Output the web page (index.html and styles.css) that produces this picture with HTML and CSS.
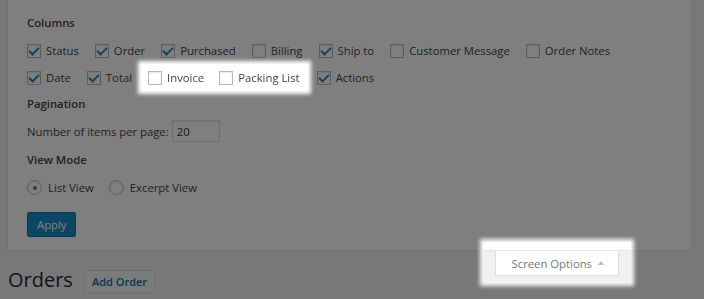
FILE: index.html
```html
<!DOCTYPE html>
<html lang="en">
<head>
  <meta charset="UTF-8">
  <meta name="viewport" content="width=device-width, initial-scale=1.0">
  <title>Orders</title>
  <link rel="stylesheet" href="styles.css">
</head>
<body>
<div class="wrap">
  <!-- Screen options panel (open) -->
  <div class="screen-meta">
    <form class="screen-options">
      <h5>Columns</h5>
      <div class="prefs">
        <div class="prefs-row">
          <label class="opt"><input type="checkbox" checked>Status</label>
          <label class="opt"><input type="checkbox" checked>Order</label>
          <label class="opt"><input type="checkbox" checked>Purchased</label>
          <label class="opt"><input type="checkbox">Billing</label>
          <label class="opt"><input type="checkbox" checked>Ship to</label>
          <label class="opt"><input type="checkbox">Customer Message</label>
          <label class="opt"><input type="checkbox">Order Notes</label>
        </div>
        <div class="prefs-row">
          <label class="opt"><input type="checkbox" checked>Date</label>
          <label class="opt"><input type="checkbox" checked>Total</label>
          <span class="spot col-spot">
            <label class="opt"><input type="checkbox">Invoice</label>
            <label class="opt"><input type="checkbox">Packing List</label>
          </span>
          <label class="opt"><input type="checkbox" checked>Actions</label>
        </div>
      </div>

      <h5 class="gap-sm">Pagination</h5>
      <div class="per-page">
        <label for="per-page">Number of items per page:</label>
        <input type="text" id="per-page" value="20">
      </div>

      <h5 class="gap-md">View Mode</h5>
      <div class="view-mode">
        <label class="opt"><input type="radio" name="mode" checked>List View</label>
        <label class="opt"><input type="radio" name="mode">Excerpt View</label>
      </div>

      <button type="button" class="button-primary">Apply</button>
    </form>
  </div>

  <!-- Screen options tab -->
  <div class="meta-links">
    <div class="spot tab-spot">
      <button type="button" class="show-settings">Screen Options <span class="arrow"></span></button>
    </div>
  </div>

  <div class="title-row">
    <h1>Orders</h1>
    <a href="#" class="title-action">Add Order</a>
  </div>
</div>

<div class="overlay"></div>
</body>
</html>
```

FILE: styles.css
```css
body {
  margin: 0;
  background-color: #f1f1f1;
  font-family: "Open Sans", "Liberation Sans", sans-serif;
  font-size: 11.3px;
  color: #444;
}

.wrap {
  padding: 0 12px 0 7px;
}

/* Panel */
.screen-meta {
  background-color: #fff;
  border: 1px solid #e5e5e5;
  border-top: 0;
}

.screen-options {
  padding: 15px 18px 13px 19px;
}

.screen-options h5 {
  margin: 0;
  font-size: 11.3px;
  font-weight: 600;
  line-height: 15px;
}

.screen-options h5.gap-sm {
  margin-top: 5px;
}

.screen-options h5.gap-md {
  margin-top: 10px;
}

.prefs {
  margin-top: 7px;
}

.prefs-row {
  display: flex;
}

.opt {
  display: flex;
  align-items: center;
  height: 27px;
  margin-right: 16px;
  white-space: nowrap;
}

/* Checkboxes and radios */
.opt input {
  -webkit-appearance: none;
  appearance: none;
  display: grid;
  place-items: center;
  width: 14px;
  height: 14px;
  margin: 0 5px 0 0;
  border: 1px solid #b4b9be;
  background-color: #fff;
  box-shadow: inset 0 1px 2px rgba(0, 0, 0, 0.1);
  box-sizing: border-box;
}

.opt input[type="checkbox"]:checked::before {
  content: "";
  width: 4px;
  height: 8px;
  margin-top: -2px;
  border: solid #1e8cbe;
  border-width: 0 2px 2px 0;
  transform: rotate(45deg);
}

.opt input[type="radio"] {
  width: 15px;
  height: 15px;
  border-radius: 50%;
  margin-right: 6px;
}

.opt input[type="radio"]:checked::before {
  content: "";
  width: 4px;
  height: 4px;
  border-radius: 50%;
  background-color: #1e8cbe;
}

/* Highlighted column options */
.col-spot {
  display: flex;
  gap: 15px;
  padding: 0 8px 0 7px;
  margin: 0 9px 0 -7px;
  background-color: #fff;
  box-shadow: 0 0 4px 3px #fff;
}

.col-spot .opt {
  margin-right: 0;
}

.per-page {
  display: flex;
  align-items: center;
  gap: 3px;
  margin-top: 9px;
}

.per-page input {
  width: 48px;
  height: 22px;
  padding: 0 4px;
  box-sizing: border-box;
  border: 1px solid #ddd;
  box-shadow: inset 0 1px 2px rgba(0, 0, 0, 0.07);
  font-family: inherit;
  font-size: 11.3px;
  color: #333;
}

.view-mode {
  display: flex;
  margin-top: 7px;
}

.view-mode .opt {
  margin-right: 15px;
}

.button-primary {
  display: block;
  margin-top: 11px;
  height: 25px;
  padding: 0 9px;
  border: 1px solid #0e74a6;
  border-radius: 2px;
  background-color: #168dc5;
  color: #fff;
  font-family: inherit;
  font-size: 11.3px;
  cursor: pointer;
}

/* Screen options tab */
.meta-links {
  float: right;
  margin: -9px 61px 0 0;
}

.tab-spot {
  padding: 9px 12px 7px;
  background: linear-gradient(#fff 0 8px, #e5e5e5 8px 9px, #f1f1f1 9px);
  box-shadow: 0 0 4px 3px #f4f4f4;
}

.show-settings {
  display: flex;
  align-items: center;
  gap: 6px;
  height: 25px;
  padding: 0 14px 0 16px;
  border: 1px solid #ddd;
  border-top: 0;
  background-color: #fff;
  color: #72777c;
  font-family: inherit;
  font-size: 11.3px;
  cursor: pointer;
}

.arrow {
  width: 0;
  height: 0;
  border-left: 3px solid transparent;
  border-right: 3px solid transparent;
  border-bottom: 4px solid #bbb;
  margin-top: -1px;
}

/* Page title */
.title-row {
  display: flex;
  align-items: flex-start;
  gap: 11px;
  margin-top: 15px;
}

.title-row h1 {
  margin: 0 0 0 1px;
  font-size: 20px;
  font-weight: 400;
  line-height: 28px;
  color: #23282d;
}

.title-action {
  margin-top: 4px;
  height: 23px;
  padding: 0 7px;
  box-sizing: border-box;
  line-height: 21px;
  border: 1px solid #ddd;
  border-radius: 2px;
  background-color: #f7f7f7;
  color: #0073aa;
  font-size: 11px;
  font-weight: 600;
  text-decoration: none;
}

/* Dim everything except the spotlights */
.overlay {
  position: fixed;
  inset: 0;
  background-color: rgba(0, 0, 0, 0.5);
  z-index: 5;
}

.spot {
  position: relative;
  z-index: 6;
}
```
